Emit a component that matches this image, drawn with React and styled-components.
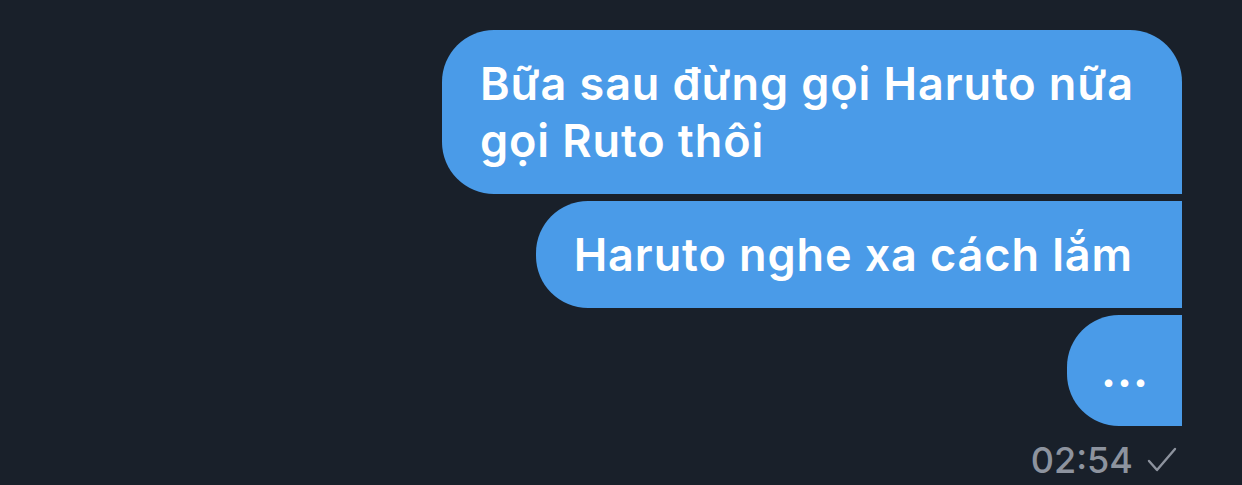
import React from "react";
import styled, { createGlobalStyle } from "styled-components";

const Global = createGlobalStyle`
  html, body { margin: 0; padding: 0; background: #19202a; }
  body { font-family: Inter, "Noto Sans", sans-serif; -webkit-font-smoothing: antialiased; }
`;

const Page = styled.div`
  width: 1242px;
  height: 485px;
  box-sizing: border-box;
  padding: 30px 60px 0 0;
  background: #19202a;
  display: flex;
  flex-direction: column;
  align-items: flex-end;
  overflow: hidden;
`;

const Thread = styled.div`
  display: flex;
  flex-direction: column;
  align-items: flex-end;
  gap: 7px;
`;

const Bubble = styled.div`
  box-sizing: border-box;
  max-width: 740px;
  background: #4a9be8;
  color: #ffffff;
  font-size: 45px;
  font-weight: 600;
  line-height: 57px;
  letter-spacing: 0.9px;
  padding: ${(p) =>
    p.$dots ? "27px 34px 27px 34px" : p.$first ? "25px 40px 25px 38px" : "25px 49px 25px 38px"};
  border-radius: 52px 52px 0 52px;
  border-top-right-radius: ${(p) => (p.$first ? "52px" : "0")};
`;

const Dots = styled.span`
  font-weight: 700;
  letter-spacing: 1px;
  margin-right: -1px;
`;

const Meta = styled.div`
  display: flex;
  align-items: center;
  gap: 14px;
  margin-top: 14px;
  margin-right: 5px;
  color: #8d939e;
  font-size: 36px;
  font-weight: 500;
  line-height: 40px;
`;

const Check = styled.svg`
  width: 30px;
  height: 26px;
`;

export default function App() {
  return (
    <>
      <Global />
      <Page>
        <Thread>
          <Bubble $first>Bữa sau đừng gọi Haruto nữa gọi Ruto thôi</Bubble>
          <Bubble>Haruto nghe xa cách lắm</Bubble>
          <Bubble $dots>
            <Dots>...</Dots>
          </Bubble>
        </Thread>
        <Meta>
          <span>02:54</span>
          <Check viewBox="0 0 30 26" fill="none">
            <path d="M2 14 L10 23 L28 2" stroke="#8d939e" strokeWidth="2.4" strokeLinecap="round" strokeLinejoin="round" />
          </Check>
        </Meta>
      </Page>
    </>
  );
}
